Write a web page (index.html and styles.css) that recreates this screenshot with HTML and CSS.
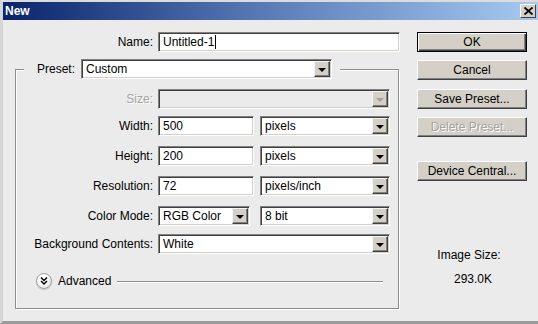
FILE: index.html
```html
<!DOCTYPE html>
<html lang="en">
<head>
  <meta charset="UTF-8">
  <title>New</title>
  <link rel="stylesheet" href="styles.css">
</head>
<body>
  <div class="window">
    <div class="titlebar">
      <span class="title">New</span>
      <span class="close">
        <svg width="9" height="8" viewBox="0 0 9 8"><path d="M0.5 0.5 L8.5 7.5 M8.5 0.5 L0.5 7.5" stroke="#000" stroke-width="1.8"/></svg>
      </span>
    </div>

    <div class="content">
      <div class="left">
        <div class="row name-row">
          <span class="lbl">Name:</span>
          <div class="field w-name">Untitled-1<span class="caret"></span></div>
        </div>

        <fieldset class="group">
          <legend class="legend">
            <span class="legend-lbl">Preset:</span>
            <div class="combo w-preset"><span class="val">Custom</span><span class="arrow"></span></div>
          </legend>

          <div class="row r-size">
            <span class="lbl disabled">Size:</span>
            <div class="combo w-full off"><span class="val"></span><span class="arrow"></span></div>
          </div>
          <div class="row r-width">
            <span class="lbl">Width:</span>
            <div class="field w-num">500</div>
            <div class="combo w-unit"><span class="val">pixels</span><span class="arrow"></span></div>
          </div>
          <div class="row r-mid">
            <span class="lbl">Height:</span>
            <div class="field w-num">200</div>
            <div class="combo w-unit"><span class="val">pixels</span><span class="arrow"></span></div>
          </div>
          <div class="row r-mid">
            <span class="lbl">Resolution:</span>
            <div class="field w-num">72</div>
            <div class="combo w-unit"><span class="val">pixels/inch</span><span class="arrow"></span></div>
          </div>
          <div class="row r-mid">
            <span class="lbl">Color Mode:</span>
            <div class="combo w-mode"><span class="val">RGB Color</span><span class="arrow"></span></div>
            <div class="combo w-unit"><span class="val">8 bit</span><span class="arrow"></span></div>
          </div>
          <div class="row r-bg">
            <span class="lbl">Background Contents:</span>
            <div class="combo w-full"><span class="val">White</span><span class="arrow"></span></div>
          </div>

          <div class="advanced">
            <span class="adv-icon">
              <svg width="10" height="10" viewBox="0 0 10 10">
                <path d="M2 1.5 L5 4.5 L8 1.5 M2 5 L5 8 L8 5" fill="none" stroke="#000" stroke-width="1.5"/>
              </svg>
            </span>
            <span class="adv-text">Advanced</span>
            <span class="adv-line"></span>
          </div>
        </fieldset>
      </div>

      <div class="right">
        <div class="btn default">OK</div>
        <div class="btn b-cancel">Cancel</div>
        <div class="btn b-save">Save Preset...</div>
        <div class="btn b-delete disabled">Delete Preset...</div>
        <div class="btn b-device">Device Central...</div>
        <div class="size-info">
          <div class="size-lbl">Image Size:</div>
          <div class="size-val">293.0K</div>
        </div>
      </div>
    </div>
  </div>
</body>
</html>
```

FILE: styles.css
```css
body {
  margin: 0;
  font-family: "Liberation Sans", Arial, sans-serif;
  font-size: 12px;
  color: #000;
}

.window {
  width: 538px;
  height: 324px;
  box-sizing: border-box;
  background: #ebebeb;
  border-top: 2px solid #dcdcdc;
  border-left: 3px solid #d6d6d6;
  border-bottom: 3px solid #9c9c9c;
  overflow: hidden;
}

.titlebar {
  height: 18px;
  display: flex;
  align-items: center;
  justify-content: space-between;
  background: linear-gradient(to right, #0a246a, #5a7db9 50%, #a6caf0);
}

.title {
  color: #fff;
  font-weight: bold;
  font-size: 12px;
  padding-left: 2px;
}

.close {
  width: 16px;
  height: 14px;
  margin-right: 2px;
  box-sizing: border-box;
  background: #d4d0c8;
  border-top: 1px solid #fff;
  border-left: 1px solid #fff;
  border-right: 1px solid #404040;
  border-bottom: 1px solid #404040;
  display: flex;
  align-items: center;
  justify-content: center;
}

.content {
  display: flex;
  padding-top: 12px;
}

.left {
  width: 402px;
}

.row {
  display: flex;
  align-items: center;
  height: 20px;
}

.lbl {
  width: 137px;
  margin-right: 5px;
  text-align: right;
}

.name-row .lbl {
  width: 150px;
}

.disabled {
  color: #a3a3a3;
  text-shadow: 1px 1px 0 #fff;
}

/* sunken edit boxes and combo boxes */
.field,
.combo {
  height: 20px;
  box-sizing: border-box;
  background: #fff;
  border-top: 1px solid #808080;
  border-left: 1px solid #808080;
  border-right: 1px solid #fff;
  border-bottom: 1px solid #fff;
  box-shadow: inset 1px 1px 0 #404040, inset -1px -1px 0 #d4d0c8;
  line-height: 18px;
  padding-left: 4px;
  white-space: nowrap;
}

.combo {
  display: flex;
  align-items: center;
  padding-left: 0;
}

.combo .val {
  flex: 1;
  padding-left: 4px;
}

.combo.off {
  background: #ebebeb;
}

.arrow {
  width: 16px;
  height: 16px;
  margin: 1px;
  box-sizing: border-box;
  background: #d4d0c8;
  border-top: 1px solid #f4f4f4;
  border-left: 1px solid #f4f4f4;
  border-right: 1px solid #404040;
  border-bottom: 1px solid #404040;
  box-shadow: inset -1px -1px 0 #808080;
  display: flex;
  align-items: center;
  justify-content: center;
}

.arrow::after {
  content: "";
  border-left: 4px solid transparent;
  border-right: 4px solid transparent;
  border-top: 4px solid #000;
  margin-top: 1px;
}

.off .arrow::after {
  border-top-color: #a0a0a0;
}

.caret {
  display: inline-block;
  width: 1px;
  height: 14px;
  background: #000;
  vertical-align: -3px;
  margin-left: 1px;
}

.w-name { width: 242px; }
.w-preset { width: 251px; }
.w-full { width: 232px; }
.w-num { width: 96px; margin-right: 6px; }
.w-unit { width: 130px; }
.w-mode { width: 92px; margin-right: 10px; }

/* group box */
.group {
  margin: 7px 0 0 12px;
  width: 384px;
  box-sizing: border-box;
  padding: 0 0 19px;
  border: 1px solid #8d8d8d;
  box-shadow: inset 1px 1px 0 #fff, 1px 1px 0 #fff;
}

.legend {
  display: flex;
  align-items: center;
  margin-left: 8px;
  padding: 0 8px 0 13px;
  background: #ebebeb;
}

.legend-lbl {
  margin-right: 6px;
}

.r-size { margin-top: 10px; }
.r-width { margin-top: 7px; }
.r-mid { margin-top: 10px; }
.r-bg { margin-top: 8px; }

.advanced {
  display: flex;
  align-items: center;
  height: 16px;
  margin-top: 19px;
  padding-left: 20px;
  padding-right: 15px;
}

.adv-icon {
  width: 16px;
  height: 16px;
  box-sizing: border-box;
  border-radius: 50%;
  border: 1px solid #9e9e9e;
  background: radial-gradient(circle at 40% 35%, #ffffff 30%, #d8d8d8);
  box-shadow: 0 1px 1px #c4c4c4;
  display: flex;
  align-items: center;
  justify-content: center;
}

.adv-text {
  margin-left: 6px;
  margin-right: 6px;
}

.adv-line {
  flex: 1;
  height: 1px;
  background: #8d8d8d;
  box-shadow: 0 1px 0 #fff;
}

/* buttons */
.right {
  padding-left: 12px;
  width: 110px;
}

.btn {
  width: 110px;
  height: 20px;
  box-sizing: border-box;
  background: #d4d0c8;
  border-top: 1px solid #fff;
  border-left: 1px solid #fff;
  border-right: 1px solid #404040;
  border-bottom: 1px solid #404040;
  box-shadow: inset -1px -1px 0 #808080;
  text-align: center;
  line-height: 18px;
}

.btn.default {
  border: 1px solid #000;
  box-shadow: inset 1px 1px 0 #fff, inset -1px -1px 0 #404040, inset -2px -2px 0 #808080;
}

.b-cancel { margin-top: 8px; }
.b-save { margin-top: 9px; }
.b-delete { margin-top: 8px; }
.b-device { margin-top: 24px; }

.size-info {
  margin-top: 67px;
  text-align: center;
  padding-right: 6px;
}

.size-lbl {
  line-height: 14px;
}

.size-val {
  margin-top: 10px;
  line-height: 14px;
  padding-left: 8px;
}
```
